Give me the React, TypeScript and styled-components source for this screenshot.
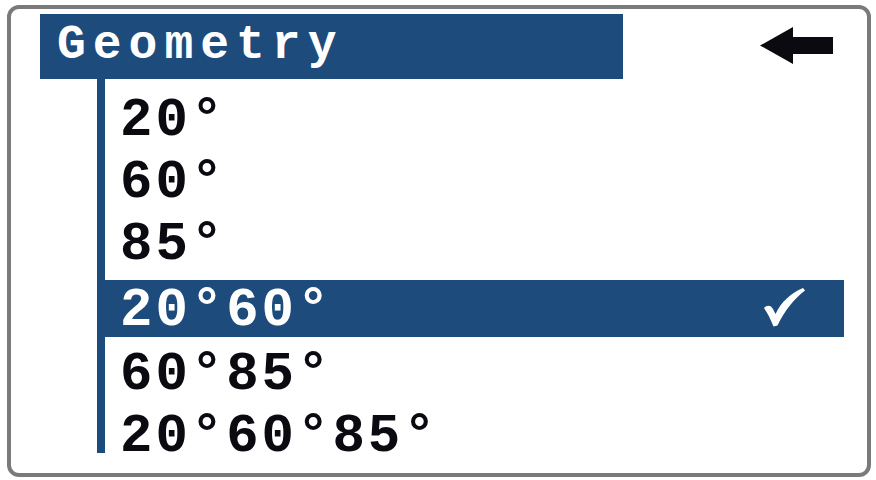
import { createGlobalStyle, styled } from "styled-components"

const GlobalStyle = createGlobalStyle`
  html, body {
    margin: 0;
    padding: 0;
    background: #ffffff;
  }
`

const BLUE = "#1d4b7c"

interface Item {
  label: string
  selected?: boolean
}

const items: Item[] = [
  { label: "20°" },
  { label: "60°" },
  { label: "85°" },
  { label: "20°60°", selected: true },
  { label: "60°85°" },
  { label: "20°60°85°" },
]

export default function App() {
  return (
    <>
      <GlobalStyle />
      <Frame>
        <TopBar>
          <Title>Geometry</Title>
          <BackButton aria-label="back">
            <svg width="73" height="37" viewBox="0 0 73 37">
              <path d="M0 18.5 L33 0 L33 10 L73 10 L73 27 L33 27 L33 37 Z" fill="#0a0a10" />
            </svg>
          </BackButton>
        </TopBar>
        <List>
          {items.map((it) => (
            <Row key={it.label} $selected={!!it.selected}>
              <Label>{it.label}</Label>
              {it.selected && (
                <svg width="42" height="40" viewBox="0 0 42 40">
                  <path
                    d="M1 21 C4 17.5 8 18 10 22 L12.5 27 C18 15 28 6 40 1 L42 3.5 C32 11 22 23 14.5 38.5 L10.5 39.5 C7.5 32 4.5 26 1 21 Z"
                    fill="#ffffff"
                  />
                </svg>
              )}
            </Row>
          ))}
        </List>
      </Frame>
    </>
  )
}

const Frame = styled.div`
  box-sizing: border-box;
  margin: 5px 0 0 7px;
  width: 864px;
  height: 472px;
  border: 4px solid #7a7a7a;
  border-radius: 12px;
  background: #ffffff;
  overflow: hidden;
`

const TopBar = styled.div`
  display: flex;
  align-items: center;
  justify-content: space-between;
  padding: 5px 34px 0 29px;
`

const Title = styled.h1`
  margin: 0;
  box-sizing: border-box;
  width: 583px;
  height: 65px;
  line-height: 63px;
  padding-left: 17px;
  background: ${BLUE};
  color: #ffffff;
  font-family: "Liberation Mono", "DejaVu Sans Mono", monospace;
  font-weight: bold;
  font-size: 48px;
  letter-spacing: 7px;
`

const BackButton = styled.div`
  display: flex;
  margin-top: -2px;
`

const List = styled.div`
  box-sizing: border-box;
  margin-left: 86px;
  width: 747px;
  height: 374px;
  border-left: 8px solid ${BLUE};
  padding-top: 11px;
`

const Row = styled.div<{ $selected: boolean }>`
  display: flex;
  align-items: flex-start;
  justify-content: space-between;
  box-sizing: border-box;
  height: ${(p) => (p.$selected ? "57px" : "62px")};
  margin: ${(p) => (p.$selected ? "4px 0 7px" : "0")};
  padding: 0 39px 0 15px;
  background: ${(p) => (p.$selected ? BLUE : "transparent")};
  color: ${(p) => (p.$selected ? "#ffffff" : "#0a0a10")};

  svg {
    margin-top: 7px;
  }
`

const Label = styled.span`
  font-family: "Liberation Mono", "DejaVu Sans Mono", monospace;
  font-weight: bold;
  font-size: 54px;
  line-height: 61px;
  letter-spacing: 3px;
  white-space: nowrap;
`
